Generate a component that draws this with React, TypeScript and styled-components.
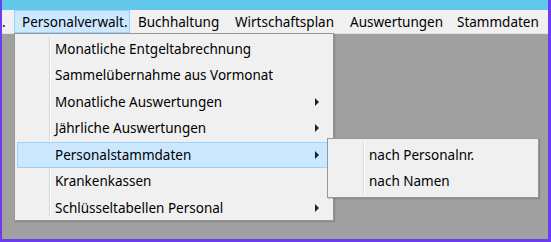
import React from "react"
import styled, { createGlobalStyle } from "styled-components"

const GlobalStyle = createGlobalStyle`
  html, body {
    margin: 0;
    padding: 0;
    background: #a0a0a0;
  }
  body {
    font-family: "Noto Sans", "Open Sans", sans-serif;
  }
`

const Frame = styled.div`
  position: relative;
  width: 551px;
  height: 242px;
  box-sizing: border-box;
  border-left: 2px solid #6b3cf2;
  border-right: 3px solid #6b3cf2;
  border-bottom: 3px solid #6b3cf2;
  display: flex;
  flex-direction: column;
  overflow: hidden;
`

const TitleStrip = styled.div`
  height: 10px;
  flex: none;
  background: #62c8eb;
`

const MenuBar = styled.div`
  height: 23px;
  flex: none;
  background: #f0f0f0;
  display: flex;
  align-items: stretch;
  font-size: 13.5px;
  color: #000;
  border-bottom: 1px solid #e3e3e3;
`

const Workspace = styled.div`
  flex: 1;
  background: #a0a0a0;
`

const BarItem = styled.div<{ $active?: boolean; $w: number }>`
  width: ${(p) => p.$w}px;
  box-sizing: border-box;
  display: flex;
  align-items: center;
  padding-left: ${(p) => (p.$active ? 7 : 8)}px;
  white-space: nowrap;
  background: ${(p) => (p.$active ? "#cce8ff" : "transparent")};
  border: ${(p) => (p.$active ? "1px solid #99d1ff" : "none")};
`

const Dot = styled.div`
  width: 12px;
  display: flex;
  align-items: center;
  font-size: 13.5px;
`

const Menu = styled.div<{ $left: number; $top: number; $w: number; $h: number }>`
  position: absolute;
  left: ${(p) => p.$left}px;
  top: ${(p) => p.$top}px;
  width: ${(p) => p.$w}px;
  height: ${(p) => p.$h}px;
  box-sizing: border-box;
  background: #f0f0f0;
  border: 1px solid #979797;
  box-shadow: 1px 1px 1px rgba(0, 0, 0, 0.15);
  font-size: 13.5px;
  color: #000;
`

const MenuList = styled.div<{ $pad: number; $sep: number }>`
  position: relative;
  padding-top: ${(p) => p.$pad}px;
  height: 100%;
  box-sizing: border-box;
  &::before {
    content: "";
    position: absolute;
    left: ${(p) => p.$sep}px;
    top: 3px;
    bottom: 3px;
    width: 1px;
    background: #d7d7d7;
    box-shadow: 1px 0 0 #ffffff;
  }
`

const Item = styled.div<{ $active?: boolean; $h: number; $text: number }>`
  position: relative;
  height: ${(p) => p.$h}px;
  margin: 0 2px;
  box-sizing: border-box;
  display: flex;
  align-items: center;
  padding-left: ${(p) => p.$text}px;
  white-space: nowrap;
  background: ${(p) => (p.$active ? "#cce8ff" : "transparent")};
  border: 1px solid ${(p) => (p.$active ? "#99d1ff" : "transparent")};
`

const Arrow = styled.span`
  position: absolute;
  right: 11px;
  top: 50%;
  margin-top: -4px;
  width: 0;
  height: 0;
  border-top: 4px solid transparent;
  border-bottom: 4px solid transparent;
  border-left: 4px solid #222;
`

const main = [
  { label: "Monatliche Entgeltabrechnung" },
  { label: "Sammelübernahme aus Vormonat" },
  { label: "Monatliche Auswertungen", sub: true },
  { label: "Jährliche Auswertungen", sub: true },
  { label: "Personalstammdaten", sub: true, active: true },
  { label: "Krankenkassen" },
  { label: "Schlüsseltabellen Personal", sub: true },
]

const bar = [
  { label: "Personalverwalt.", w: 116, active: true },
  { label: "Buchhaltung", w: 97 },
  { label: "Wirtschaftsplan", w: 115 },
  { label: "Auswertungen", w: 107 },
  { label: "Stammdaten", w: 90 },
]

export default function App() {
  return (
    <>
      <GlobalStyle />
      <Frame>
        <TitleStrip />
        <MenuBar>
          <Dot>.</Dot>
          {bar.map((b) => (
            <BarItem key={b.label} $w={b.w} $active={b.active}>
              {b.label}
            </BarItem>
          ))}
        </MenuBar>
        <Workspace />
        <Menu $left={12} $top={33} $w={320} $h={188}>
          <MenuList $pad={1.5} $sep={34}>
            {main.map((m) => (
              <Item key={m.label} $h={26.5} $text={37} $active={m.active}>
                {m.label}
                {m.sub && <Arrow />}
              </Item>
            ))}
          </MenuList>
        </Menu>
        <Menu $left={325} $top={138} $w={212} $h={60}>
          <MenuList $pad={3} $sep={35}>
            <Item $h={26} $text={38}>nach Personalnr.</Item>
            <Item $h={26} $text={38}>nach Namen</Item>
          </MenuList>
        </Menu>
      </Frame>
    </>
  )
}
